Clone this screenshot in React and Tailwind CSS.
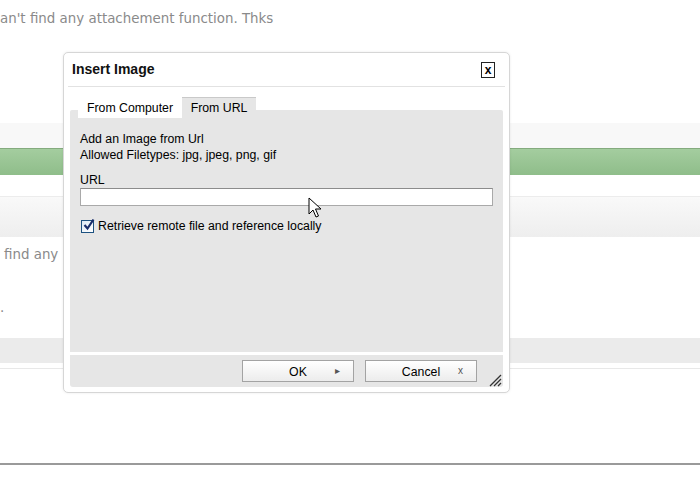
const PAGE_FONT = { fontFamily: '"DejaVu Sans", Verdana, sans-serif' };

function Cursor() {
  return (
    <svg className="absolute left-[308px] top-[197px]" width="14" height="22" viewBox="0 0 14 22">
      <path
        d="M1 1 L1 17 L5 13 L8 20 L10.5 19 L7.5 12 L13 12 Z"
        fill="#fff"
        stroke="#000"
        strokeWidth="1"
        strokeLinejoin="round"
      />
    </svg>
  );
}

function ResizeGrip() {
  return (
    <svg className="absolute right-[7px] bottom-[5px]" width="13" height="13" viewBox="0 0 13 13">
      <path d="M12 1 L1 12 M12 5 L5 12 M12 9 L9 12" stroke="#333" strokeWidth="1.3" />
    </svg>
  );
}

function DialogButton({ label, mark }) {
  return (
    <button className="relative h-[22px] w-[112px] border border-[#a3a3a3] bg-gradient-to-b from-white to-[#ececec] text-[12.3px] text-black">
      <span className="absolute left-0 right-0 top-[2px] text-center">{label}</span>
      <span className="absolute right-[13px] top-[2px] text-[10px] text-[#555]">{mark}</span>
    </button>
  );
}

function InsertImageDialog() {
  return (
    <div
      className="absolute left-[63px] top-[52px] h-[341px] w-[447px] rounded-[5px] border border-[#d6d6d6] bg-white shadow-[0_0_3px_rgba(0,0,0,0.08)]"
      style={{ fontFamily: '"Liberation Sans", Arial, sans-serif' }}
    >
      <div className="flex h-[33px] items-center justify-between pl-[8px] pr-[14px]">
        <div className="text-[14px] font-bold text-[#111]">Insert Image</div>
        <div className="mt-[1px] flex h-[16px] w-[14px] items-center justify-center border border-[#222] text-[12px] font-bold leading-none text-black">
          x
        </div>
      </div>
      <div className="mx-[4px] h-px bg-[#e2e2e2]" />

      <div className="mx-[6px] mt-[10px]">
        <div className="relative z-10 mb-[-8px] flex h-[21px] pl-[8px] text-[12.3px] text-black">
          <div className="flex w-[104px] items-center justify-center bg-white pt-[2px]">From Computer</div>
          <div className="flex w-[74px] items-center justify-center border-t border-[#c9c9c9] bg-[#e6e6e6] pt-[1px]">
            From URL
          </div>
        </div>
        <div className="h-[242px] rounded-t-[2px] bg-[#e6e6e6] px-[10px] pt-[21px] text-[12.3px] leading-[16px] text-black">
          <div>Add an Image from Url</div>
          <div>Allowed Filetypes: jpg, jpeg, png, gif</div>
          <div className="mt-[9px]">URL</div>
          <div className="h-[18px] w-[413px] border border-[#a9a9a9] border-t-[#8c8c8c] bg-white" />
          <div className="mt-[12px] flex items-center gap-[4px]">
            <div className="relative ml-[1px] h-[13px] w-[13px] border border-[#1c5180] bg-gradient-to-br from-[#dce9f5] to-[#fff]">
              <svg className="absolute left-[1px] top-[-3px]" width="12" height="13" viewBox="0 0 12 13">
                <path d="M1.5 7 L4.5 10.5 L10.5 1.5" fill="none" stroke="#1a2e6b" strokeWidth="2.2" />
              </svg>
            </div>
            <span>Retrieve remote file and reference locally</span>
          </div>
        </div>
        <div className="mt-[3px] flex h-[32px] items-center justify-end gap-[11px] rounded-b-[3px] bg-[#e6e6e6] pr-[26px]">
          <DialogButton label="OK" mark="▸" />
          <DialogButton label="Cancel" mark="x" />
        </div>
      </div>
      <ResizeGrip />
    </div>
  );
}

export default function App() {
  return (
    <div className="relative h-[490px] w-[700px] overflow-hidden bg-white text-[13.4px] text-[#8a8a8a]" style={PAGE_FONT}>
      <div className="h-[123px] pt-[10px] leading-[17px]">an't find any attachement function. Thks</div>
      <div className="h-[25px] bg-[#f8f8f8]" />
      <div className="h-[27px] border-t border-[#84ab7e] bg-gradient-to-b from-[#a4cd9f] to-[#8fbd8a]" />
      <div className="h-[21px] bg-white" />
      <div className="h-px bg-[#ececec]" />
      <div className="h-[40px] bg-gradient-to-b from-[#f9f9f9] to-[#eeeeee]" />
      <div className="h-[101px] pl-[4px] pt-[9px] leading-[17px]">
        <div>find any .</div>
        <div className="ml-[-4px] mt-[36px]">.</div>
      </div>
      <div className="h-[25px] bg-[#ebebeb]" />
      <div className="h-[5px] bg-white" />
      <div className="h-px bg-[#e8e8e8]" />
      <div className="h-[94px] bg-white" />
      <div className="h-[2px] bg-[#9a9a9a]" />

      <InsertImageDialog />
      <Cursor />
    </div>
  );
}
